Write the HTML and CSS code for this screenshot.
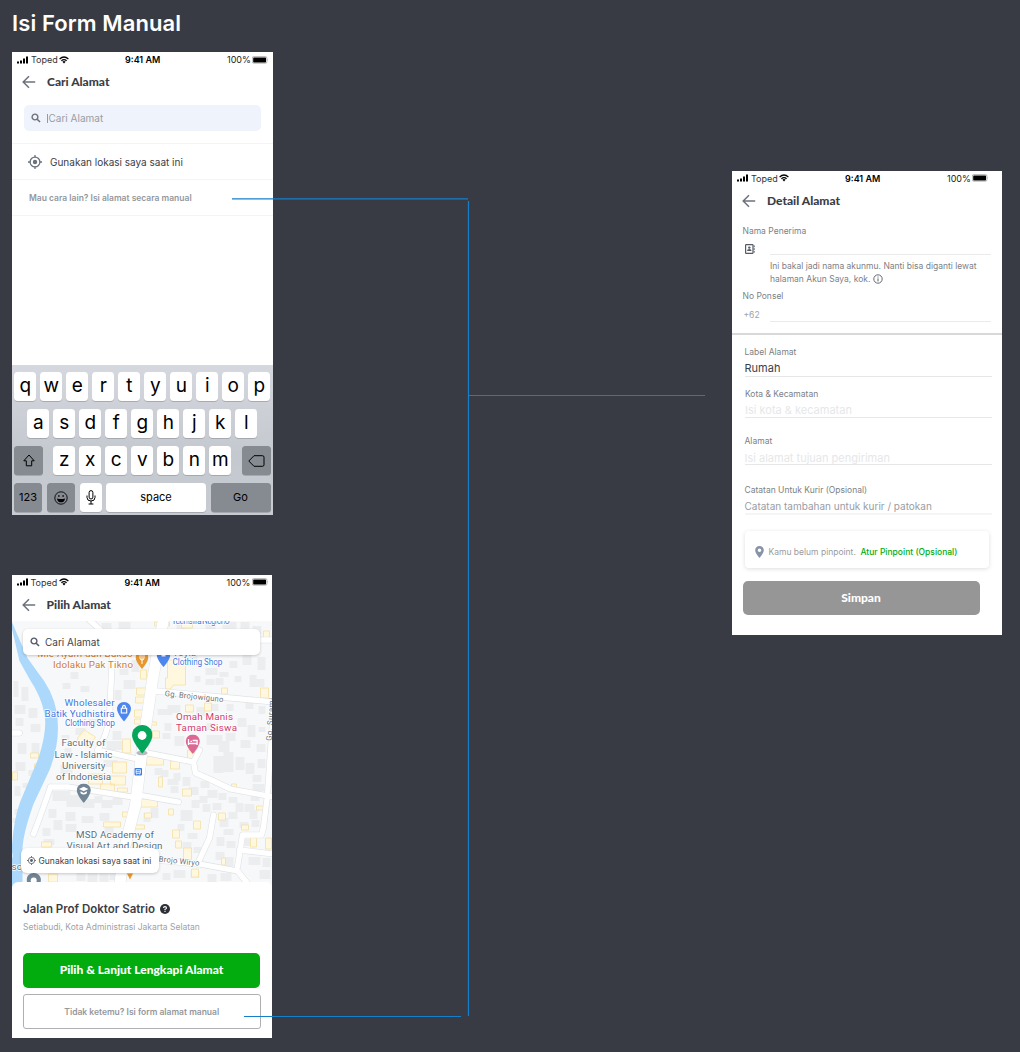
FILE: index.html
```
<!DOCTYPE html>
<html lang="id">
<head>
<meta charset="utf-8">
<title>Isi Form Manual</title>
<link rel="stylesheet" href="styles.css">
</head>
<body>
<svg class="defs" aria-hidden="true">
  <symbol id="signal" viewBox="0 0 12 8"><path d="M0 5.6h2v1.9H0zM3 4.4h2v3.1H3zM6 2.6h2v4.9H6zM9 .5h2v7H9z"/></symbol>
  <symbol id="wifi" viewBox="0 0 10 8"><g fill="none" stroke="currentColor" stroke-width="1.3"><path d="M.6 2.9Q5-.9 9.4 2.9M2.4 4.7Q5 2.5 7.6 4.7"/></g><path d="M3.4 5.7Q5 4.5 6.6 5.7L5 7.4z"/></symbol>
  <symbol id="battery" viewBox="0 0 17 8"><rect x=".3" y=".6" width="14.6" height="6.6" rx="1.4" fill="none" stroke="#888" stroke-width=".6"/><rect x="1.2" y="1.4" width="12.8" height="5" rx=".6"/><path d="M15.6 2.8q1 1.1 0 2.2z" fill="#888"/></symbol>
  <symbol id="back" viewBox="0 0 14 14"><path d="M13.2 7H1.2M7 1.2L1.2 7 7 12.8" fill="none" stroke="currentColor" stroke-width="1.5"/></symbol>
  <symbol id="search" viewBox="0 0 10 10"><circle cx="4" cy="4" r="2.9" fill="none" stroke="currentColor" stroke-width="1.4"/><path d="M6.2 6.2L9 9" stroke="currentColor" stroke-width="1.6"/></symbol>
  <symbol id="locate" viewBox="0 0 14 14"><circle cx="7" cy="7" r="4.9" fill="none" stroke="currentColor" stroke-width="1.3"/><circle cx="7" cy="7" r="2.2"/><path d="M7 0v2.4M7 11.6V14M0 7h2.4M11.6 7H14" stroke="currentColor" stroke-width="1.3"/></symbol>
  <symbol id="pin" viewBox="0 0 20 28"><path d="M10 0C4.300 0 0 4.300 0 9.800 0 17 10 28 10 28S20 17 20 9.800C20 4.300 15.700 0 10 0z"/></symbol>
</svg>

<main class="board">
  <h1 class="board-title">Isi Form Manual</h1>

  <section class="phone phone-search">
    <div class="status"><svg class="i-signal"><use href="#signal"/></svg><span class="carrier">Toped</span><svg class="i-wifi"><use href="#wifi"/></svg><b class="clock">9:41 AM</b><span class="percent">100%</span><svg class="i-battery"><use href="#battery"/></svg></div>
    <header class="bar"><svg class="i-back"><use href="#back"/></svg><h2 class="bar-title t-cari">Cari Alamat</h2></header>
    <div class="field"><svg class="i-search"><use href="#search"/></svg><span class="caret"></span><span class="field-hint">Cari Alamat</span></div>
    <div class="option"><svg class="i-locate"><use href="#locate"/></svg><span class="option-text">Gunakan lokasi saya saat ini</span></div>
    <div class="option option-manual"><span class="manual-text">Mau cara lain? Isi alamat secara manual</span></div>
    <div class="keyboard">
      <div class="keys"><kbd>q</kbd><kbd>w</kbd><kbd>e</kbd><kbd>r</kbd><kbd>t</kbd><kbd>y</kbd><kbd>u</kbd><kbd>i</kbd><kbd>o</kbd><kbd>p</kbd></div>
      <div class="keys"><kbd>a</kbd><kbd>s</kbd><kbd>d</kbd><kbd>f</kbd><kbd>g</kbd><kbd>h</kbd><kbd>j</kbd><kbd>k</kbd><kbd>l</kbd></div>
      <div class="keys keys-wide">
        <kbd class="dark k-shift"><svg width="12" height="13" viewBox="0 0 12 13"><path d="M6 1L.8 6.800H3.300V11.800H8.700V6.800H11.200z" fill="none" stroke="currentColor" stroke-linejoin="round"/></svg></kbd>
        <div class="keys"><kbd>z</kbd><kbd>x</kbd><kbd>c</kbd><kbd>v</kbd><kbd>b</kbd><kbd>n</kbd><kbd>m</kbd></div>
        <kbd class="dark k-shift"><svg width="17" height="12" viewBox="0 0 17 12"><path d="M6 .7H14.500Q16 .7 16 2.200V9.800Q16 11.300 14.500 11.300H6L.8 6z" fill="none" stroke="currentColor" stroke-linejoin="round"/></svg></kbd>
      </div>
      <div class="keys keys-bottom">
        <kbd class="dark k-num">123</kbd>
        <kbd class="dark k-emoji"><svg width="14" height="14" viewBox="0 0 14 14"><circle cx="7" cy="7" r="6.200" fill="none" stroke="currentColor" stroke-width=".9"/><ellipse cx="4.900" cy="5" rx=".7" ry="1"/><ellipse cx="9.100" cy="5" rx=".7" ry="1"/><path d="M3 7.400Q7 8.400 11 7.400Q10.500 11.300 7 11.300T3 7.400z"/></svg></kbd>
        <kbd class="k-mic"><svg width="10" height="15" viewBox="0 0 10 15"><rect x="3.100" y=".6" width="3.800" height="8.400" rx="1.900" fill="none" stroke="currentColor"/><path d="M1 5.500V7.500Q1 11 5 11T9 7.500V5.500M5 11V14M2.600 14H7.400" fill="none" stroke="currentColor"/></svg></kbd>
        <kbd class="k-space">space</kbd>
        <kbd class="dark k-go">Go</kbd>
      </div>
    </div>
  </section>

  <section class="phone phone-map">
    <div class="status"><svg class="i-signal"><use href="#signal"/></svg><span class="carrier">Toped</span><svg class="i-wifi"><use href="#wifi"/></svg><b class="clock">9:41 AM</b><span class="percent">100%</span><svg class="i-battery"><use href="#battery"/></svg></div>
    <header class="bar"><svg class="i-back"><use href="#back"/></svg><h2 class="bar-title t-pilih">Pilih Alamat</h2></header>
    <div class="map">
      <svg class="map-art" viewBox="11.5 621 260 266">
        <path fill="#f7f8fa" d="M11 621h262v266H11z"/>
        <g fill="#ebedef">
          <path d="M101 623h10v6h-10zM118 622h12v8h-12zM176 624h9v5h-9zM205 623h10v6h-10zM222 622h14v7h-14zM240 622h9v7h-9zM252 626h9v8h-9zM119 665h9v10h-9zM131 660h8v12h-8zM123 680h12v9h-12zM114 690h7v10h-7zM189 656h8v7h-8zM205 668h12v7h-12zM219 672h9v5h-9zM229 661h8v7h-8zM242 655h9v10h-9zM257 657h8v13h-8zM194 676h6v6h-6zM205 679h9v6h-9zM215 678h8v7h-8zM234 676h7v6h-7zM249 675h7v12h-7zM252 679h12v8h-12z"/>
          <path d="M13 681h5v16h-5zM21 687h7v14h-7zM14 705h11v9h-11zM28 708h9v10h-9zM15 718h8v8h-8zM30 724h10v8h-10zM17 743h9v11h-9zM31 743h8v12h-8zM15 762h10v9h-10zM28 770h8v6h-8zM14 786h6v10h-6zM22 783h6v5h-6zM14 809h5v6h-5zM12 818h6v5h-6zM70 672h8v7h-8zM62 683h8v6h-8zM80 686h9v6h-9zM61 735h8v5h-8zM64 748h7v9h-7zM60 765h12v9h-12zM75 728h10v7h-10zM88 719h11v5h-11zM112 731h9v9h-9zM106 741h16v9h-16zM103 760h14v7h-14zM52 791h18v10h-18zM66 795h22v12h-22zM82 799h12v9h-12zM94 796h8v7h-8zM101 800h11v8h-11zM112 798h10v7h-10zM48 809h8v9h-8zM53 820h9v10h-9zM65 812h10v9h-10zM65 824h11v8h-11zM81 816h12v7h-12zM99 813h10v8h-10zM104 825h9v8h-9zM42 828h8v8h-8zM43 839h11v6h-11zM76 872h9v9h-9zM87 870h10v13h-10zM99 870h9v12h-9zM109 873h11v7h-11z"/>
          <path d="M157 709h15v6h-15zM167 705h13v8h-13zM196 707h10v9h-10zM210 704h8v7h-8zM226 704h7v7h-7zM245 702h8v7h-8zM258 706h7v8h-7zM164 723h7v8h-7zM206 723h8v7h-8zM237 718h9v9h-9zM247 725h8v12h-8zM258 727h7v5h-7zM174 736h10v10h-10zM162 733h8v6h-8zM206 735h16v10h-16zM218 741h11v11h-11zM225 733h10v8h-10zM240 740h10v8h-10zM256 744h9v8h-9zM213 756h10v17h-10zM223 752h10v20h-10zM235 757h9v13h-9zM245 763h9v11h-9zM257 759h8v9h-8zM211 779h5v4h-5zM252 784h12v7h-12zM252 775h9v7h-9z"/>
          <path d="M154 768h8v7h-8zM160 770h8v7h-8zM173 773h7v8h-7zM167 779h11v6h-11zM182 777h8v9h-8zM170 786h8v7h-8zM188 787h10v8h-10zM200 781h9v7h-9zM199 796h8v7h-8zM207 790h10v8h-10zM218 793h8v7h-8zM191 800h8v8h-8zM180 810h12v11h-12zM150 808h8v10h-8zM143 813h7v9h-7zM177 824h7v7h-7zM187 833h10v6h-10zM182 842h9v7h-9zM193 847h8v6h-8zM202 804h8v8h-8zM212 803h9v7h-9zM228 797h9v6h-9zM235 803h8v9h-8zM228 812h9v7h-9zM244 804h10v8h-10zM250 795h9v6h-9zM249 810h8v9h-8zM219 818h9v9h-9zM223 829h10v6h-10zM216 837h8v9h-8zM226 841h9v7h-9zM215 852h9v8h-9zM224 857h9v9h-9zM239 822h9v6h-9zM251 820h8v7h-8zM248 857h12v8h-12zM262 858h8v9h-8zM244 839h6v7h-6zM173 870h12v8h-12zM162 873h8v7h-8zM207 874h9v8h-9zM190 871h9v7h-9zM220 873h11v8h-11zM259 870h11v9h-11z"/>
        </g>
        <g fill="#fff8df" stroke="#f5dfa5" stroke-width=".8">
          <path d="M154 622h15v4h-15zM181 622h11v6h-11zM263 631h6v10h-6zM167 660h18v25h-12l-3 4h-5v-11h2zM140 670h6v9h-6zM136 688h10v7h-10zM135 697h9v6h-9zM185 705h8v7h-8zM204 703h7v8h-7zM221 688h6v6h-6zM260 688h8v10h-8zM134 710h9v7h-9zM134 719h8v5h-8zM152 731h7v7h-7zM151 722h5v3h-5z"/>
          <path d="M77 738l7-8 11 7-7 10-10-3zM122 739h8v14h-8zM112 762h14v11h-14zM110 776h15v9h-15zM88 774h14v10h-14zM100 784h14v8h-14zM117 788h10v4h-10zM146 755h17v10h-17zM170 761h9v8h-9zM158 777h4v10h-4zM182 789h9v7h-9zM187 750h7v9h-7zM231 784h5v4h-5zM30 753h8v5h-8zM34 764h5v7h-5zM12 772h5v8h-5zM122 812h9v5h-9zM103 822h17v5h-17zM138 799h19v8h-19zM133 825h11v4h-11zM168 809h5v6h-5zM193 821h7v8h-7zM218 813h7v7h-7zM256 806h8v4h-8zM241 825h7v5h-7zM250 837h6v10h-6zM265 838h6v11h-6zM172 830h7v8h-7zM175 841h6v7h-6zM183 848h8v12h-8zM221 858h4v7h-4zM191 869h7v8h-7zM41 842h10v5h-10zM48 874h9v8h-9zM144 813h7v5h-7zM269 786h4v8h-4z"/>
        </g>
        <path fill="#acd8fb" d="M11 627L19 661 29 679Q41 697 44 714 47 730 38 758L20 801Q9 829 11 887H22V850Q22 835 33 804L49 770Q61 739 56 711 52 690 37 672L27 658 11 621z"/>
        <g fill="none" stroke="#dfe2e5" stroke-linecap="round" stroke-linejoin="round">
          <path id="lanes" stroke-width="6.500" d="M88 619L102 632M112 655L109 716Q107 735 97 750L137 759M50 787H68L132 797M50 787Q43 808 33 834M9 733H19M155 691L273 702M142 752L193 762 195 773 211 780 230 789 273 797M193 762L199 750M273 708L267 795 263 827 261 835H242L237 867M138 795L178 802M213 815L209 838 197 864M156 860L199 864 237 871 250 887M239 850L273 854M229 640H273"/>
          <path id="avenue" stroke-width="12" d="M163 619L152 680 141 755 135 805 124 848 119 887"/>
        </g>
        <g fill="none" stroke="#fff" stroke-linecap="round" stroke-linejoin="round">
          <path stroke-width="5.300" d="M88 619L102 632M112 655L109 716Q107 735 97 750L137 759M50 787H68L132 797M50 787Q43 808 33 834M9 733H19M155 691L273 702M142 752L193 762 195 773 211 780 230 789 273 797M193 762L199 750M273 708L267 795 263 827 261 835H242L237 867M138 795L178 802M213 815L209 838 197 864M156 860L199 864 237 871 250 887M239 850L273 854M229 640H273"/>
          <path stroke-width="11" d="M163 619L152 680 141 755 135 805 124 848 119 887"/>
        </g>
        <g class="map-label orange">
          <text x="37" y="657" textLength="95">Mie Ayam dan Bakso</text>
          <text x="52.500" y="667.500" textLength="80">Idolaku Pak Tikno</text>
        </g>
        <use href="#pin" x="135" y="651" width="13" height="18" fill="#e8972f"/>
        <path d="M139.500 654v4q0 2 2 2t2-2v-4M141.500 654v10" fill="none" stroke="#fff" stroke-width="1"/>
        <use href="#pin" x="156" y="648" width="14" height="19" fill="#4c86ee"/>
        <path d="M161 653.500h4v3h-4z" fill="#fff"/>
        <g class="map-label blue">
          <text x="171" y="623.500" textLength="58" font-size="8.500">Yudhistira Nugroho</text>
          <text x="172" y="656" textLength="24">Toyib</text>
          <text x="172" y="664.500" textLength="50" font-size="8.300">Clothing Shop</text>
          <text x="64" y="705.500" textLength="50">Wholesaler</text>
          <text x="44" y="716.500" textLength="70">Batik Yudhistira</text>
          <text x="64.500" y="726" textLength="50" font-size="8.300">Clothing Shop</text>
        </g>
        <use href="#pin" x="116.500" y="702" width="14" height="19.500" fill="#4c86ee"/>
        <path d="M120.800 708.300h5.400v4.700h-5.400zM122 708q0-2.600 1.500-2.600T125 708" fill="none" stroke="#fff" stroke-width="1.100"/>
        <g class="map-label slate">
          <text x="61" y="746" textLength="44">Faculty of</text>
          <text x="54" y="757.500" textLength="58">Law - Islamic</text>
          <text x="61.500" y="768.500" textLength="43.500">University</text>
          <text x="55.500" y="779.500" textLength="55">of Indonesia</text>
          <text x="75.500" y="837.500" textLength="78">MSD Academy of</text>
          <text x="66" y="848.500" textLength="96">Visual Art and Design</text>
          <text x="4" y="858">jo</text>
          <text x="0" y="870">Wiso.</text>
        </g>
        <use href="#pin" x="76" y="783.500" width="14.500" height="19.500" fill="#718594"/>
        <path d="M78.500 789l4.700-2.300 4.700 2.300-4.700 2.300zM80 791.300l3.200 1.600 3.200-1.600v2q-3.200 2.600-6.400 0z" fill="#fff"/>
        <g class="map-label pink">
          <text x="175.500" y="719.500" textLength="57">Omah Manis</text>
          <text x="175.500" y="730.500" textLength="61">Taman Siswa</text>
        </g>
        <use href="#pin" x="185" y="734.500" width="14.500" height="19.500" fill="#dc6893"/>
        <path d="M188 739v6M188 743.500h8.600v-3h-4.500M196.500 743v2M190 741.400h1.500" fill="none" stroke="#fff" stroke-width="1.300"/>
        <g class="map-label road">
          <text transform="translate(164 696) rotate(6)" textLength="59">Gg. Brojowiguno</text>
          <text transform="translate(158 861.500) rotate(6)" textLength="41">Brojo Wiryo</text>
          <text transform="translate(271 741) rotate(-86)" textLength="43">Gg. Surami</text>
        </g>
        <rect x="134" y="768" width="7.500" height="7.500" rx="1" fill="#3d7de0"/>
        <path d="M135.600 769.700h4.300v3.600h-4.300zM135.600 771.700h4.300M136.200 773.500v1M139.300 773.500v1" fill="none" stroke="#fff" stroke-width=".8"/>
        <ellipse cx="141.500" cy="753" rx="5.500" ry="2.300" fill="#5e666b" opacity=".45"/>
        <use href="#pin" x="131.500" y="725" width="20.500" height="28.500" fill="#03a65a"/>
        <circle cx="141.600" cy="735.500" r="4.400" fill="#fff"/>
        <use href="#pin" x="26" y="873" width="14.500" height="20" fill="#718594"/>
        <circle cx="33.200" cy="880.500" r="3" fill="#fff"/>
        <path d="M126.500 873.500h6l-3 6z" fill="#e8972f"/>
      </svg>
      <div class="map-search"><svg class="i-search"><use href="#search"/></svg><span class="map-search-text">Cari Alamat</span></div>
      <div class="map-locate"><svg class="i-locate-sm"><use href="#locate"/></svg><span class="map-locate-text">Gunakan lokasi saya saat ini</span></div>
    </div>
    <div class="sheet">
      <h3 class="place">Jalan Prof Doktor Satrio <svg class="i-help" viewBox="0 0 10 10"><circle cx="5" cy="5" r="5"/><path d="M3.500 4Q3.500 2.600 5 2.600T6.500 3.900Q6.500 4.700 5 5.300V6M5 6.800v1.100" fill="none" stroke="#fff" stroke-width="1.100"/></svg></h3>
      <p class="district">Setiabudi, Kota Administrasi Jakarta Selatan</p>
      <button class="pick">Pilih &amp; Lanjut Lengkapi Alamat</button>
      <button class="manual">Tidak ketemu? Isi form alamat manual</button>
    </div>
  </section>

  <section class="phone phone-form">
    <div class="status"><svg class="i-signal"><use href="#signal"/></svg><span class="carrier">Toped</span><svg class="i-wifi"><use href="#wifi"/></svg><b class="clock">9:41 AM</b><span class="percent">100%</span><svg class="i-battery"><use href="#battery"/></svg></div>
    <header class="bar"><svg class="i-back"><use href="#back"/></svg><h2 class="bar-title t-detail">Detail Alamat</h2></header>
    <div class="person">
      <label class="label l-nama">Nama Penerima</label>
      <div class="entry entry-name"><svg class="i-contact" viewBox="0 0 10 10"><rect x=".6" y=".6" width="7.400" height="8.800" rx=".6" fill="none" stroke="currentColor" stroke-width="1.200"/><circle cx="4.300" cy="3.600" r="1.200"/><path d="M2 7q0-1.900 2.300-1.900T6.600 7z"/><path d="M9.200 1.400v1.800M9.200 4.200v1.700M9.200 6.900v1.700" stroke="currentColor" stroke-width="1"/></svg><span class="line"></span></div>
      <p class="help"><span class="help-a">Ini bakal jadi nama akunmu. Nanti bisa diganti lewat</span><br><span class="help-b">halaman Akun Saya, kok.</span> <svg class="i-info" viewBox="0 0 10 10"><circle cx="5" cy="5" r="4.200" fill="none" stroke="currentColor" stroke-width=".9"/><path d="M5 4.400v3M5 2.500v1" stroke="currentColor"/></svg></p>
      <label class="label l-ponsel">No Ponsel</label>
      <div class="entry entry-phone"><span class="prefix">+62</span><span class="line"></span></div>
    </div>
    <div class="address">
      <div class="group g-label"><label class="label l-label">Label Alamat</label><span class="value v-rumah">Rumah</span></div>
      <div class="group g-kota"><label class="label l-kota">Kota &amp; Kecamatan</label><span class="value faint v-kota">Isi kota &amp; kecamatan</span></div>
      <div class="group g-alamat"><label class="label l-alamat">Alamat</label><span class="value faint v-alamat">Isi alamat tujuan pengiriman</span></div>
      <div class="group g-note"><label class="label l-note">Catatan Untuk Kurir (Opsional)</label><span class="value note v-note">Catatan tambahan untuk kurir / patokan</span></div>
      <div class="pinpoint"><svg class="i-place" viewBox="0 0 9 12"><path fill-rule="evenodd" d="M4.500 0C2 0 .2 1.900.2 4.300.2 7.500 4.500 12 4.500 12S8.800 7.500 8.800 4.300C8.800 1.900 7 0 4.500 0zM4.500 2.500a1.800 1.800 0 1 1 0 3.600 1.800 1.800 0 0 1 0-3.600z"/></svg><span class="pp-a">Kamu belum pinpoint.</span><span class="pp-b">Atur Pinpoint (Opsional)</span></div>
      <button class="save">Simpan</button>
    </div>
  </section>

  <svg class="flow" viewBox="0 0 1020 1052"><path d="M232 198.900H468M468.500 201V1016M469 395.500H705M244 1016.500H461"/></svg>
</main>
</body>
</html>
```
FILE: styles.css
```
* { box-sizing: border-box; }
body { margin: 0; background: #383b43; font-family: Inter, "Liberation Sans", sans-serif; color: #3b3e46; }
h1, h2, h3, p { margin: 0; }
svg { display: block; flex: none; fill: currentColor; }
button { font-family: inherit; padding: 0; border: 0; }
.defs { position: absolute; width: 0; height: 0; }

.board {
  position: relative; width: 1020px; height: 1052px; overflow: hidden;
  display: grid; grid-template-columns: 732px 270px; grid-template-rows: 52px 522.500px 1fr;
}
.board-title { padding: 8px 0 0 12px; font-size: 22px; line-height: 30px; font-weight: 600; color: #fff; white-space: nowrap; letter-spacing: .1px; }
.phone { background: #fff; display: flex; flex-direction: column; overflow: hidden; white-space: nowrap; }
.phone-search { grid-area: 2 / 1; width: 260.500px; height: 463px; margin-left: 12px; }
.phone-map { grid-area: 3 / 1; width: 260.500px; height: 463px; margin-left: 11.500px; }
.phone-form { grid-area: 2 / 2 / 4 / 3; width: 270px; height: 464.500px; margin-top: 118.500px; }
.flow { position: absolute; inset: 0; width: 1020px; height: 1052px; fill: none; stroke: #167fca; stroke-width: 1.200; pointer-events: none; }

.status { height: 15px; display: flex; align-items: center; color: #000; font-size: 9px; padding-left: 5px; flex: none; }
.i-signal { width: 12px; height: 8px; margin-right: 2px; }
.carrier { width: 28px; color: #333; }
.i-wifi { width: 10px; height: 8px; }
.clock { margin-left: 56px; width: 102px; font-weight: 600; }
.percent { width: 25px; color: #222; }
.i-battery { width: 17px; height: 8px; }
.bar { height: 30px; display: flex; align-items: center; padding-left: 10px; gap: 11px; flex: none; }
.i-back { width: 14px; height: 14px; color: #6c727c; }
.bar-title { font: 900 12px/16px Lato, sans-serif; color: #3b3e46; }

.field { height: 26px; margin: 8px 11.500px 12px; border-radius: 5px; background: #eff3fb; display: flex; align-items: center; padding-left: 7px; color: #6c727c; flex: none; }
.i-search { width: 10px; height: 10px; }
.caret { width: 1px; height: 9px; background: #999; margin-left: 6px; }
.field-hint { font-size: 10px; color: #9a9da3; margin-left: 1px; }
.option { height: 36px; border-top: 1px solid #f3f4f5; display: flex; align-items: center; padding-left: 16px; flex: none; }
.i-locate { width: 14px; height: 14px; color: #6c727c; margin-right: 8px; }
.option-text { font-size: 10px; }
.option-manual { height: 37px; border-bottom: 1px solid #f3f4f5; }
.manual-text { font-size: 8.500px; font-weight: 600; color: #94979c; margin-left: 1px; }

.keyboard { margin-top: auto; height: 150px; padding: 7px 2px 0; background: linear-gradient(#d5d8de, #c4c8cf 60%, #c8ccd2); display: flex; flex-direction: column; gap: 8px; flex: none; color: #000; }
.keys { display: flex; justify-content: center; gap: 4px; }
kbd { font: 19px/27px Inter, sans-serif; width: 22px; height: 29px; border-radius: 3.500px; background: #fff; box-shadow: 0 .7px 0 #9a9da2; display: flex; justify-content: center; }
.keys-wide { justify-content: space-between; }
kbd.dark { background: #868a91; align-items: center; }
.k-shift { width: 29px; }
.keys-bottom { justify-content: space-between; }
.keys-bottom kbd { font-size: 11px; align-items: center; }
.keyboard .k-num { width: 28px; }
.keyboard .k-emoji { width: 28.500px; }
.keyboard .k-space { width: 100px; }
.keyboard .k-go { width: 60px; }

.map { position: relative; height: 266px; margin-top: 1.500px; margin-bottom: -5px; flex: none; }
.map-art { width: 260px; height: 266px; }
.map-label { font-family: Roboto, sans-serif; font-size: 9.800px; paint-order: stroke; stroke: #fff; stroke-width: 1.500px; stroke-linejoin: round; }
.orange { fill: #cf7a2b; } .blue { fill: #3f77df; } .slate { fill: #5b6f7c; } .pink { fill: #d33b70; } .road { fill: #6c7176; font-size: 7.800px; }
.map-search, .map-locate { position: absolute; background: #fff; display: flex; align-items: center; box-shadow: 0 1px 3px #0003; }
.map-search { left: 11.500px; top: 8px; width: 237px; height: 26px; border-radius: 5px; padding-left: 7px; gap: 5px; color: #555b66; font-size: 10px; }
.map-locate { left: 9px; top: 227px; width: 138px; height: 25px; border-radius: 6px; padding-left: 6px; gap: 3px; font-size: 8.500px; }
.i-locate-sm { width: 9px; height: 9px; color: #555b66; }
.map-search-text { color: #3f434c; }
.sheet { position: relative; flex: 1; background: #fff; border-radius: 6px 6px 0 0; padding: 19px 11.500px 0; }
.place { font-size: 11.500px; line-height: 16px; font-weight: 600; display: flex; gap: 5px; align-items: center; }
.i-help { width: 10px; height: 10px; color: #2c2f36; }
.district { font-size: 8.500px; line-height: 12px; margin-top: 4px; color: #a0a2a6; }
.pick { display: block; width: 237px; height: 34.500px; margin-top: 20px; border-radius: 5px; background: #03ac0e; color: #fff; font: 900 12px/34px Lato, sans-serif; }
.manual { display: block; width: 237.500px; height: 35px; margin-top: 6.500px; border: 1px solid #aeb0b2; border-radius: 3px; background: #fff; color: #94979c; font-size: 8.500px; font-weight: 600; }

.label { display: block; font-size: 8.500px; line-height: 12px; color: #7c7f85; }
.person { height: 119.500px; padding: 9px 11px 0 10.500px; border-bottom: 2.500px solid #d9d9d9; flex: none; }
.entry { display: flex; align-items: center; color: #555b66; }
.line { align-self: flex-end; margin-left: auto; width: 221px; height: 1px; background: #e9eaec; }
.entry-name { height: 18px; }
.i-contact { width: 10px; height: 10px; margin: 7px 0 0 2px; }
.help { padding: 5px 0 0 27.500px; font-size: 8.500px; line-height: 13px; color: #7c7f85; }
.i-info { width: 10px; height: 10px; display: inline-block; vertical-align: -2px; color: #555b66; }
.l-ponsel { margin-top: 4px; }
.entry-phone { height: 20px; }
.prefix { font-size: 8.500px; color: #a0a2a6; margin: 6px 0 0 1px; }
.address { padding-left: 12.500px; }
.group { width: 247.500px; border-bottom: 1px solid #e6e7e9; }
.value { display: block; font-size: 11px; line-height: 16px; }
.faint { color: #e6e7ea; }
.note { font-size: 10px; color: #9a9da3; }
.g-label { padding-top: 11px; height: 42px; }
.g-label .value { margin-top: 2px; }
.g-kota { padding-top: 11px; height: 41px; }
.g-kota .label { margin-left: .5px; }
.g-kota .value { margin: 2px 0 0 .5px; }
.g-alamat { padding-top: 17px; height: 47px; }
.g-alamat .value { margin-top: 3px; }
.g-note { padding-top: 19px; height: 49.500px; border-bottom: 2px solid #f4f5f6; }
.g-note .value { margin-top: 2px; }
.pinpoint { width: 244px; height: 37px; margin: 16.500px 0 0 .5px; border-radius: 4px; box-shadow: 0 1px 4px #0002; display: flex; align-items: center; padding: 4px 0 0 10px; font-size: 8.500px; color: #999ca1; }
.i-place { width: 9px; height: 12px; color: #8793a8; margin-right: 4.500px; }
.pp-a { width: 92px; }
.pp-b { color: #03ac0e; font-weight: 500; }
.save { display: block; width: 237px; height: 34.500px; margin: 12.500px 0 0 -2px; border-radius: 5px; background: #969696; color: #fff; font: 900 12px/34px Lato, sans-serif; }
```
